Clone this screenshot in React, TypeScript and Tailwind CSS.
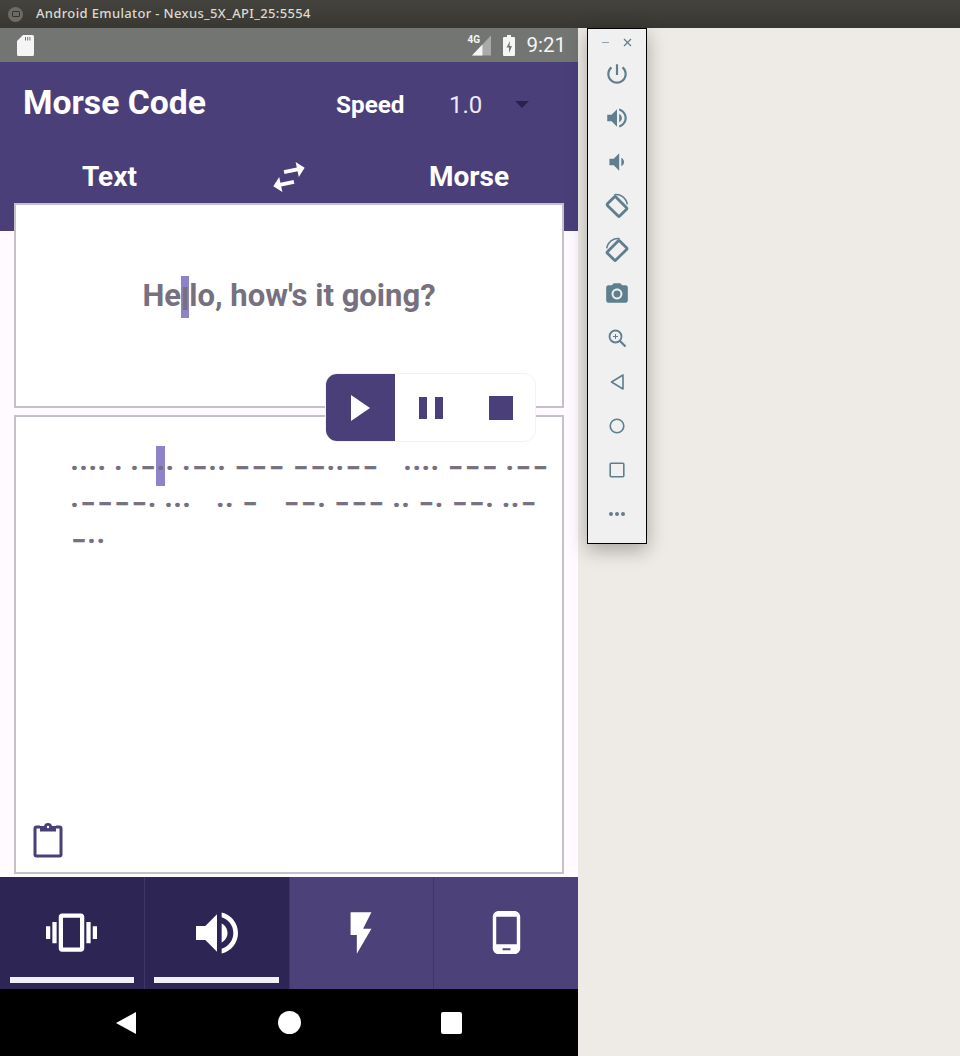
import React from 'react';

const Icon = ({ d, size, className }: { d: string; size: number; className?: string }) => (
  <svg width={size} height={size} viewBox="0 0 24 24" fill="currentColor" className={className}>
    <path d={d} />
  </svg>
);

const icons = {
  power: 'M13 3h-2v10h2V3zm4.83 2.17l-1.42 1.42C17.99 7.86 19 9.81 19 12c0 3.87-3.13 7-7 7s-7-3.13-7-7c0-2.19 1.01-4.14 2.58-5.42L6.17 5.17C4.23 6.82 3 9.26 3 12c0 4.97 4.03 9 9 9s9-4.03 9-9c0-2.74-1.23-5.18-3.17-6.83z',
  volumeUp: 'M3 9v6h4l5 5V4L7 9H3zm13.5 3c0-1.77-1.02-3.29-2.5-4.03v8.05c1.48-.73 2.5-2.25 2.5-4.02zM14 3.23v2.06c2.89.86 5 3.54 5 6.71s-2.11 5.85-5 6.71v2.06c4.01-.91 7-4.49 7-8.77s-2.99-7.86-7-8.77z',
  volumeDown: 'M18.5 12c0-1.77-1.02-3.29-2.5-4.03v8.05c1.48-.73 2.5-2.25 2.5-4.02zM5 9v6h4l5 5V4L9 9H5z',
  camera: 'M9 2L7.17 4H4c-1.1 0-2 .9-2 2v12c0 1.1.9 2 2 2h16c1.1 0 2-.9 2-2V6c0-1.1-.9-2-2-2h-3.17L15 2H9zm3 15c-2.76 0-5-2.24-5-5s2.24-5 5-5 5 2.24 5 5-2.24 5-5 5zm0-8.2a3.2 3.2 0 1 0 0 6.4 3.2 3.2 0 0 0 0-6.4z',
  vibration: 'M0 15h2V9H0v6zm3 2h2V7H3v10zm19-8v6h2V9h-2zm-3 8h2V7h-2v10zM16.5 3h-9C6.67 3 6 3.67 6 4.5v15c0 .83.67 1.5 1.5 1.5h9c.83 0 1.5-.67 1.5-1.5v-15c0-.83-.67-1.5-1.5-1.5zM16 19H8V5h8v14z',
  flash: 'M7 2v11h3v9l7-12h-4l4-8z',
  phone: 'M16 1H8C6.34 1 5 2.34 5 4v16c0 1.66 1.34 3 3 3h8c1.66 0 3-1.34 3-3V4c0-1.66-1.34-3-3-3zm-2 20h-4v-1h4v1zm3.25-3H6.75V4h10.5v14z',
  swap: 'M6.99 11L3 15l3.99 4v-3H14v-2H6.99v-3zM21 9l-3.99-4v3H10v2h7.01v3L21 9z',
};

const Rotate = ({ flip }: { flip?: boolean }) => (
  <svg width="26" height="26" viewBox="0 0 24 24" fill="none" stroke="currentColor" className={flip ? '-scale-x-100' : ''}>
    <rect x="6.500" y="4.500" width="11" height="16" rx="1" strokeWidth="2.600" transform="rotate(-45 12 12.500)" />
    <path d="M9.500 1.500c5.500-1 11 3 12 9" strokeWidth="1.400" />
  </svg>
);

const Morse = ({ code, mark }: { code: string; mark?: number }) => (
  <div className="flex h-[36.5px] items-center text-[#76707f]">
    {code.split('').map((c, i) => {
      if (c === ' ') return <span key={i} className="w-[7.3px] shrink-0"> </span>;
      if (c === '/') return <span key={i} className="w-[24.5px] shrink-0"> </span>;
      if (c === '.')
        return (
          <span
            key={i}
            className={
              i === mark
                ? 'mb-[4px] flex h-[40px] w-[9.1px] shrink-0 items-center justify-center bg-[#8e83c9] pt-[4px] text-[30px] font-bold leading-none'
                : 'flex w-[9.1px] shrink-0 justify-center text-[30px] font-bold leading-none'
            }
          >
            ·
          </span>
        );
      return (
        <span
          key={i}
          className="flex w-[17.1px] shrink-0 justify-center text-[21px] font-black leading-none [-webkit-text-stroke:0.6px_#76707f]"
        >
          –
        </span>
      );
    })}
  </div>
);

const BottomTab = ({ d, size, active }: { d: string; size: number; active?: boolean }) => (
  <div className={`relative flex flex-1 items-center justify-center pb-[1px] text-white ${active ? 'bg-[#2d2655]' : 'bg-[#4c4279]'}`}>
    <Icon d={d} size={size} />
    {active && <div className="absolute bottom-[6px] left-[9.500px] right-[9.500px] h-[6px] bg-[#f3f0f4]" />}
  </div>
);

export default function App() {
  return (
    <div className="relative flex h-[1056px] w-[960px] flex-col overflow-hidden bg-[#eeebe6] font-['Roboto',sans-serif]">
      {/* Title bar */}
      <div className="flex h-[28px] shrink-0 items-center bg-gradient-to-b from-[#45433e] to-[#383732] pl-[8px]">
        <div className="flex h-[15px] w-[15px] items-center justify-center rounded-full bg-[#6d6b66]">
          <div className="h-[6px] w-[8px] rounded-[1px] border border-[#33322e]" />
        </div>
        <span className="ml-[13px] font-['Noto_Sans',sans-serif] text-[13px] font-medium tracking-[0.35px] text-[#dcd9d2]">
          Android Emulator - Nexus_5X_API_25:5554
        </span>
      </div>

      {/* Phone */}
      <div className="flex w-[578px] flex-1 flex-col bg-[#fefaff]">
        <div className="flex h-[34px] shrink-0 items-center bg-[#737573] pl-[17px] pr-[12px] text-[#f5f5f5]">
          <svg width="17" height="21" viewBox="0 0 17 21" fill="currentColor">
            <path d="M6 0h9.500A1.500 1.500 0 0 1 17 1.500v18a1.500 1.500 0 0 1-1.500 1.500h-14A1.500 1.500 0 0 1 0 19.500V6zM8 2v3.500h1V2zm2.200 0v3.500h1V2zm2.200 0v3.500h1V2z" fillRule="evenodd" />
          </svg>
          <div className="relative ml-auto h-[21px] w-[19px]">
            <svg width="19" height="21" viewBox="0 0 20 21" className="absolute left-0 top-0">
              <path d="M20 0v21H0z" fill="#a9aaa9" />
              <path d="M11 9.500V21H0z" fill="#f5f5f5" />
            </svg>
            <span className="absolute left-[-5px] top-[0px] text-[10px] font-bold leading-[10px]">4G</span>
          </div>
          <svg width="12" height="21" viewBox="0 0 12 21" fill="currentColor" className="ml-[12px]">
            <path fillRule="evenodd" d="M4 0h4v2h3a1 1 0 0 1 1 1v17a1 1 0 0 1-1 1H1a1 1 0 0 1-1-1V3a1 1 0 0 1 1-1h3zM7 6 3.500 12.500H6V18l3-7H6.500z" />
          </svg>
          <span className="ml-[11px] text-[20.5px] leading-none">9:21</span>
        </div>

        <div className="h-[169px] shrink-0 bg-[#4b3f7a] text-white">
          <div className="flex h-[82px] items-center pl-[23px]">
            <span className="w-[313px] text-[33.7px] font-bold">Morse Code</span>
            <span className="w-[113px] pt-[4px] text-[24.300px] font-bold">Speed</span>
            <span className="w-[66px] pt-[4px] text-[24px] text-[#eeeaf5]">1.0</span>
            <div className="mt-[2px] h-0 w-0 border-x-[7px] border-t-[7px] border-x-transparent border-t-[#29224f]" />
          </div>
          <div className="flex h-[59px] items-center pt-[6px] text-[28px] font-bold">
            <span className="w-[266px] pl-[82px]">Text</span>
            <Icon d={icons.swap} size={46} className="-rotate-12" />
            <span className="ml-[117px]">Morse</span>
          </div>
        </div>

        <div className="mx-[14px] -mt-[28px] flex h-[205px] shrink-0 items-center justify-center border-2 border-[#c5c1c9] bg-white pb-[18px] text-[31px] font-bold text-[#76707f]">
          He<span className="inline-block bg-[#8e83c9] pt-[6px] leading-[36px]">l</span>lo, how's it going?
        </div>

        <div className="mx-[14px] mt-[7px] h-[459px] shrink-0 border-2 border-[#c5c1c9] bg-white pl-[54px] pt-[33px]">
          <Morse code=".... . .-.. .-.. --- --..--/.... --- .--" mark={9} />
          <Morse code=".----. .../.. -/--. --- .. -. --. ..-" />
          <Morse code="-.." />
          <svg width="32" height="36" viewBox="0 0 32 36" fill="none" stroke="#4b3f7a" strokeWidth="3" className="ml-[-38px] mt-[262px]">
            <path d="M8 5H4.500A1.500 1.500 0 0 0 3 6.500v26A1.500 1.500 0 0 0 4.500 34h23a1.500 1.500 0 0 0 1.500-1.500v-26A1.500 1.500 0 0 0 27.500 5H24" />
            <path d="M9 8.500V5h4a3 3 0 0 1 6 0h4v3.500z" fill="#4b3f7a" strokeWidth="2" />
            <circle cx="16" cy="5" r="1.200" fill="#fff" stroke="none" />
          </svg>
        </div>

        <div className="mt-[3px] flex h-[112px] shrink-0 gap-[1px] bg-[#3f3569]">
          <BottomTab d={icons.vibration} size={51} active />
          <BottomTab d={icons.volumeUp} size={56} active />
          <BottomTab d={icons.flash} size={50} />
          <BottomTab d={icons.phone} size={47} />
        </div>

        <div className="flex h-[67px] shrink-0 items-center bg-black pl-[116px]">
          <div className="h-0 w-0 border-y-[11.500px] border-r-[20px] border-y-transparent border-r-white" />
          <div className="ml-[142px] h-[23px] w-[23px] rounded-full bg-white" />
          <div className="ml-[140px] h-[22px] w-[21px] rounded-[2px] bg-white" />
        </div>
      </div>

      {/* Player controls, floating over the cards */}
      <div className="absolute left-[325px] top-[373px] flex h-[69px] w-[211px] overflow-hidden rounded-[12px] border border-[#f3f1f5] bg-white text-[#4b3f7a]">
        <div className="flex w-[69px] items-center justify-center bg-[#4b3f7a]">
          <div className="h-0 w-0 border-y-[13.500px] border-l-[19px] border-y-transparent border-l-white" />
        </div>
        <div className="ml-[24px] flex items-center gap-[8px]">
          <div className="h-[22px] w-[8px] bg-[#4b3f7a]" />
          <div className="h-[22px] w-[8px] bg-[#4b3f7a]" />
        </div>
        <div className="ml-[46px] flex items-center">
          <div className="h-[24px] w-[24px] bg-[#4b3f7a]" />
        </div>
      </div>

      {/* Emulator side toolbar */}
      <div className="absolute left-[587px] top-[28px] flex h-[516px] w-[60px] flex-col items-center border border-black bg-[#f0f0f0] text-[#5f7e8e] shadow-[0_6px_18px_rgba(0,0,0,0.3)]">
        <div className="flex h-[23px] w-full shrink-0 items-center justify-between px-[14px] pt-[4px]">
          <div className="h-[1.500px] w-[7px] bg-[#8fa3ae]" />
          <svg width="9" height="9" viewBox="0 0 9 9" stroke="currentColor" strokeWidth="1.200">
            <path d="M1 1l7 7M8 1l-7 7" />
          </svg>
        </div>
        <div className="flex h-[44px] shrink-0 items-center"><Icon d={icons.power} size={26} /></div>
        <div className="flex h-[44px] shrink-0 items-center"><Icon d={icons.volumeUp} size={26} /></div>
        <div className="flex h-[44px] shrink-0 items-center"><Icon d={icons.volumeDown} size={26} /></div>
        <div className="flex h-[44px] shrink-0 items-center"><Rotate /></div>
        <div className="flex h-[44px] shrink-0 items-center"><Rotate flip /></div>
        <div className="flex h-[44px] shrink-0 items-center"><Icon d={icons.camera} size={26} /></div>
        <div className="flex h-[44px] shrink-0 items-center">
          <svg width="24" height="24" viewBox="0 0 24 24" fill="none" stroke="currentColor" strokeWidth="1.800">
            <circle cx="10.500" cy="10.500" r="6" />
            <path d="M15 15l5.500 5.500" strokeWidth="2.200" />
            <path d="M10.500 8v5M8 10.500h5" strokeWidth="1" />
          </svg>
        </div>
        <div className="flex h-[44px] shrink-0 items-center">
          <svg width="24" height="24" viewBox="0 0 24 24" fill="none" stroke="currentColor" strokeWidth="1.600">
            <path d="M18 5v14L6.500 12z" strokeLinejoin="round" />
          </svg>
        </div>
        <div className="flex h-[44px] shrink-0 items-center">
          <svg width="24" height="24" viewBox="0 0 24 24" fill="none" stroke="currentColor" strokeWidth="1.600">
            <circle cx="12" cy="12" r="6.800" />
          </svg>
        </div>
        <div className="flex h-[44px] shrink-0 items-center">
          <svg width="24" height="24" viewBox="0 0 24 24" fill="none" stroke="currentColor" strokeWidth="1.600">
            <rect x="5.200" y="5.200" width="13.600" height="13.600" rx="1" />
          </svg>
        </div>
        <div className="flex h-[44px] shrink-0 items-center gap-[2px]">
          <div className="h-[4px] w-[4px] rounded-full bg-[#5f7e8e]" />
          <div className="h-[4px] w-[4px] rounded-full bg-[#5f7e8e]" />
          <div className="h-[4px] w-[4px] rounded-full bg-[#5f7e8e]" />
        </div>
      </div>
    </div>
  );
}
